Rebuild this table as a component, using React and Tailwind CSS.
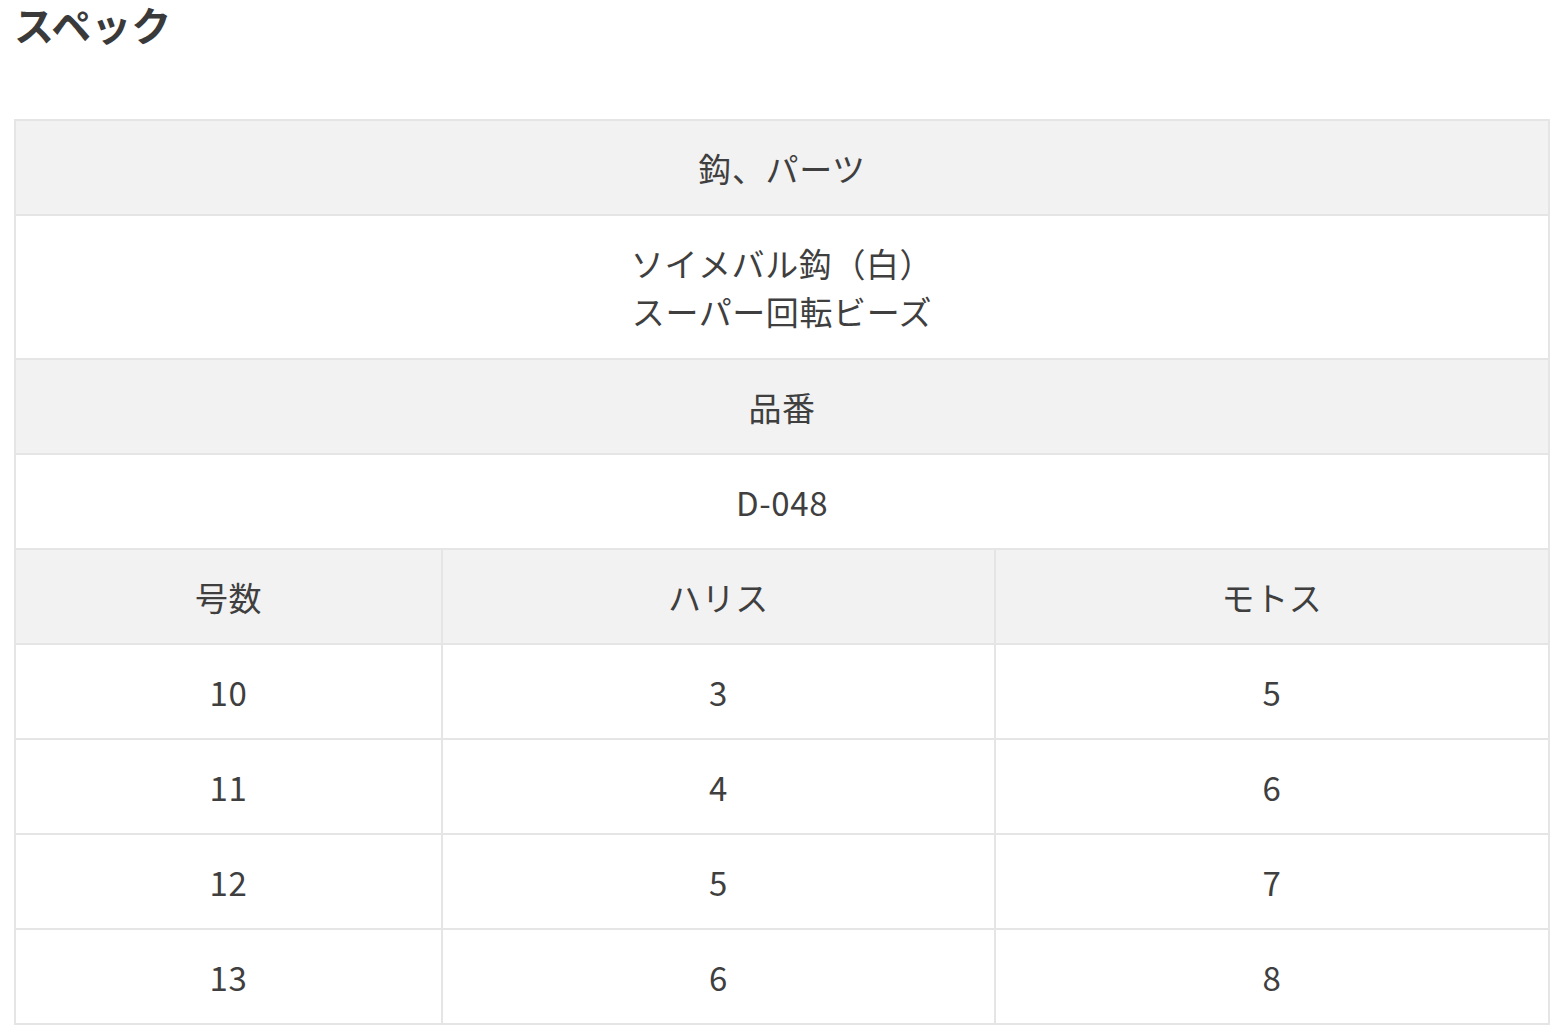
const rows = [
  ["10", "3", "5"],
  ["11", "4", "6"],
  ["12", "5", "7"],
  ["13", "6", "8"],
];

function Cell({ head, span, className = "", children }) {
  return (
    <td
      colSpan={span}
      className={
        "border-2 border-[#e5e5e5] text-center align-middle px-4 " +
        (head ? "bg-[#f2f2f2] " : "bg-white ") +
        className
      }
    >
      {children}
    </td>
  );
}

export default function App() {
  return (
    <div
      className="bg-white min-h-screen px-[14px] text-[#3f3f3f]"
      style={{ fontFamily: '"Noto Sans CJK JP", "Noto Sans", sans-serif' }}
    >
      <h2 className="text-[40px] font-bold leading-none pt-[4px] text-[#3a3a3a]">スペック</h2>

      <table className="mt-[75px] w-[1534px] border-collapse text-[33px] tracking-[0.6px] leading-[48px] table-fixed">
        <colgroup>
          <col className="w-[427px]" />
          <col className="w-[553px]" />
          <col className="w-[554px]" />
        </colgroup>
        <tbody>
          <tr className="h-[95px]">
            <Cell head span={3}>鈎、パーツ</Cell>
          </tr>
          <tr className="h-[144px]">
            <Cell span={3}>
              ソイメバル鈎（白）
              <br />
              スーパー回転ビーズ
            </Cell>
          </tr>
          <tr className="h-[95px]">
            <Cell head span={3}>品番</Cell>
          </tr>
          <tr className="h-[95px]">
            <Cell span={3}>D-048</Cell>
          </tr>
          <tr className="h-[95px]">
            <Cell head>号数</Cell>
            <Cell head>ハリス</Cell>
            <Cell head>モトス</Cell>
          </tr>
          {rows.map((r) => (
            <tr key={r[0]} className="h-[95px]">
              {r.map((v, i) => (
                <Cell key={i}>{v}</Cell>
              ))}
            </tr>
          ))}
        </tbody>
      </table>
    </div>
  );
}
